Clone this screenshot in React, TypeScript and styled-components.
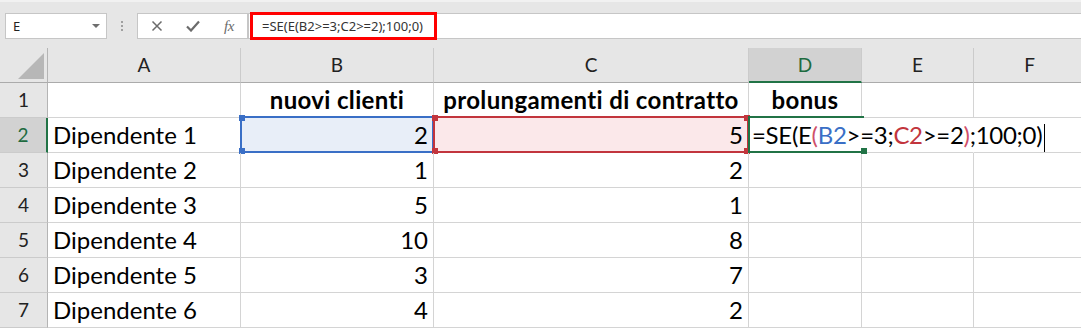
import React from 'react';
import styled, { createGlobalStyle } from 'styled-components';

const GlobalStyle = createGlobalStyle`
  html, body { margin: 0; padding: 0; background: #ffffff; }
  body { font-family: Lato, "Liberation Sans", sans-serif; overflow: hidden; }
  *, *::before, *::after { box-sizing: border-box; }
`;

const Page = styled.div`
  width: 1081px;
  height: 328px;
  overflow: hidden;
  background: #e6e6e6;
`;

/* ---------- toolbar ---------- */
const Toolbar = styled.div`
  height: 48px;
  display: flex;
  align-items: flex-start;
  padding: 11px 0 0 5px;
  border-top: 2px solid #f1f1f1;
  background: #e6e6e6;
`;

const NameBox = styled.div`
  width: 102px;
  height: 26px;
  background: #ffffff;
  border: 1px solid #c6c6c6;
  display: flex;
  align-items: center;
  justify-content: space-between;
  padding: 0 6px 0 7px;
  font-family: "Noto Sans", "Open Sans", sans-serif;
  font-size: 13px;
  color: #222;
`;

const DropArrow = styled.span`
  width: 0;
  height: 0;
  border-left: 4px solid transparent;
  border-right: 4px solid transparent;
  border-top: 4px solid #6e6e6e;
`;

const Grip = styled.div`
  margin: 8px 0 0 14px;
  display: flex;
  flex-direction: column;
  gap: 2px;
  & > span {
    width: 2px;
    height: 2px;
    background: #a0a0a0;
  }
`;

const ButtonGroup = styled.div`
  margin-left: 14px;
  width: 111px;
  height: 26px;
  background: #ffffff;
  border: 1px solid #c6c6c6;
  display: flex;
  align-items: center;
  padding-left: 1px;
`;

const IconSlot = styled.span`
  width: 36px;
  height: 24px;
  display: flex;
  align-items: center;
  justify-content: center;
  color: #6b6b6b;
`;

const FxText = styled.span`
  font-family: "Liberation Serif", "DejaVu Serif", serif;
  font-style: italic;
  font-size: 15px;
  color: #6b6b6b;
  letter-spacing: -0.5px;
`;

const FormulaBar = styled.div`
  flex: 1;
  height: 26px;
  background: #ffffff;
  border: 1px solid #c6c6c6;
  border-right: none;
  display: flex;
  align-items: center;
`;

const Highlight = styled.span`
  height: 28px;
  margin-left: 1px;
  border: 3px solid #ff0000;
  padding: 0 11px 0 9px;
  display: inline-flex;
  align-items: center;
  font-family: "Noto Sans", "Open Sans", sans-serif;
  font-size: 13px;
  color: #333;
  white-space: nowrap;
`;

/* ---------- sheet ---------- */
const Sheet = styled.div`
  display: grid;
  grid-template-columns: 48px 193px 193px 315px 113px 112px 112px;
  grid-auto-rows: 35px;
  background: #ffffff;
`;

const Corner = styled.div`
  background: #e6e6e6;
  border-right: 1px solid #b4b4b4;
  border-bottom: 1px solid #ababab;
  display: flex;
  align-items: flex-end;
  justify-content: flex-end;
  padding: 0 3px 3px 0;
`;

const Triangle = styled.span`
  width: 0;
  height: 0;
  border-left: 26px solid transparent;
  border-bottom: 26px solid #b7b7b7;
`;

const ColHeader = styled.div<{ $active?: boolean }>`
  background: ${p => (p.$active ? '#d2d2d2' : '#e6e6e6')};
  border-right: 1px solid #cbcbcb;
  border-bottom: ${p => (p.$active ? '2px solid #217346' : '1px solid #ababab')};
  text-align: center;
  font-size: 19px;
  line-height: ${p => (p.$active ? '33px' : '34px')};
  color: ${p => (p.$active ? '#1e6b40' : '#222')};
`;

const RowHeader = styled.div<{ $active?: boolean }>`
  background: ${p => (p.$active ? '#d2d2d2' : '#e6e6e6')};
  border-right: ${p => (p.$active ? '2px solid #217346' : '1px solid #b4b4b4')};
  border-bottom: 1px solid #cbcbcb;
  text-align: center;
  font-size: 19px;
  line-height: 34px;
  color: ${p => (p.$active ? '#1e6b40' : '#222')};
`;

const Cell = styled.div<{
  $align?: 'left' | 'right' | 'center';
  $bold?: boolean;
  $fill?: string;
  $noRight?: boolean;
  $front?: boolean;
}>`
  position: relative;
  background: ${p => p.$fill || 'transparent'};
  border-right: 1px solid ${p => (p.$noRight ? 'transparent' : '#d4d4d4')};
  border-bottom: 1px solid #d4d4d4;
  padding: 0 5px;
  font-size: 24px;
  font-weight: ${p => (p.$bold ? 700 : 400)};
  letter-spacing: ${p => (p.$bold ? '0.35px' : '0')};
  line-height: 34px;
  color: #000;
  text-align: ${p => p.$align || 'left'};
  white-space: nowrap;
  overflow: visible;
  z-index: ${p => (p.$front ? 2 : 1)};
`;

const FormulaText = styled.span`
  margin-left: -2px;
  letter-spacing: -0.3px;
`;

const Frame = styled.div<{ $color: string; $open?: boolean }>`
  position: absolute;
  top: -2px;
  left: -1px;
  right: ${p => (p.$open ? '-3px' : '-1px')};
  bottom: -1px;
  border: 2px solid ${p => p.$color};
  border-right: ${p => (p.$open ? 'none' : `2px solid ${p.$color}`)};
  pointer-events: none;
`;

const Handle = styled.span<{ $color: string; $v: 'top' | 'bottom'; $h: 'left' | 'right' }>`
  position: absolute;
  width: 6px;
  height: 6px;
  background: ${p => p.$color};
  ${p => (p.$v === 'top' ? 'top: -3px;' : 'bottom: -3px;')}
  ${p => (p.$h === 'left' ? 'left: -3px;' : 'right: -3px;')}
`;

const Ref = styled.span<{ $color: string }>`
  color: ${p => p.$color};
`;

const Caret = styled.span`
  display: inline-block;
  width: 1px;
  height: 28px;
  margin-left: 2px;
  background: #000;
  vertical-align: middle;
`;

const BLUE = '#3a6fc6';
const RED = '#c2353d';
const GREEN = '#217346';
const PAREN = '#d0506a';

const rows = [
  ['Dipendente 1', '2', '5'],
  ['Dipendente 2', '1', '2'],
  ['Dipendente 3', '5', '1'],
  ['Dipendente 4', '10', '8'],
  ['Dipendente 5', '3', '7'],
  ['Dipendente 6', '4', '2'],
];

const cols = ['A', 'B', 'C', 'D', 'E', 'F'];

export default function App() {
  return (
    <Page>
      <GlobalStyle />
      <Toolbar>
        <NameBox>
          <span>E</span>
          <DropArrow />
        </NameBox>
        <Grip>
          <span />
          <span />
          <span />
        </Grip>
        <ButtonGroup>
          <IconSlot>
            <svg width="12" height="12" viewBox="0 0 12 12">
              <path d="M1.5 1.5 L10.5 10.5 M10.5 1.5 L1.5 10.5" stroke="#6b6b6b" strokeWidth="1.5" fill="none" />
            </svg>
          </IconSlot>
          <IconSlot>
            <svg width="14" height="12" viewBox="0 0 14 12">
              <path d="M1 6.5 L5 10.5 L13 1.5" stroke="#6b6b6b" strokeWidth="2.2" fill="none" />
            </svg>
          </IconSlot>
          <IconSlot>
            <FxText>fx</FxText>
          </IconSlot>
        </ButtonGroup>
        <FormulaBar>
          <Highlight>=SE(E(B2&gt;=3;C2&gt;=2);100;0)</Highlight>
        </FormulaBar>
      </Toolbar>

      <Sheet>
        <Corner>
          <Triangle />
        </Corner>
        {cols.map(c => (
          <ColHeader key={c} $active={c === 'D'}>
            {c}
          </ColHeader>
        ))}

        <RowHeader>1</RowHeader>
        <Cell />
        <Cell $bold $align="center">nuovi clienti</Cell>
        <Cell $bold $align="center">prolungamenti di contratto</Cell>
        <Cell $bold $align="center">bonus</Cell>
        <Cell />
        <Cell />

        {rows.map((r, i) => {
          const active = i === 0;
          return (
            <React.Fragment key={r[0]}>
              <RowHeader $active={active}>{i + 2}</RowHeader>
              <Cell>{r[0]}</Cell>
              <Cell $align="right" $fill={active ? '#e8eef8' : undefined}>
                {r[1]}
                {active && (
                  <Frame $color={BLUE}>
                    <Handle $color={BLUE} $v="top" $h="left" />
                    <Handle $color={BLUE} $v="bottom" $h="left" />
                  </Frame>
                )}
              </Cell>
              <Cell $align="right" $fill={active ? '#fbe8ea' : undefined}>
                {r[2]}
                {active && (
                  <Frame $color={RED}>
                    <Handle $color={RED} $v="top" $h="left" />
                    <Handle $color={RED} $v="bottom" $h="left" />
                    <Handle $color={RED} $v="top" $h="right" />
                    <Handle $color={RED} $v="bottom" $h="right" />
                  </Frame>
                )}
              </Cell>
              {active ? (
                <Cell $noRight $front>
                  <FormulaText>
                    =SE(E<Ref $color={PAREN}>(</Ref>
                    <Ref $color={BLUE}>B2</Ref>&gt;=3;
                    <Ref $color={RED}>C2</Ref>&gt;=2<Ref $color={PAREN}>)</Ref>;100;0)
                  </FormulaText>
                  <Caret />
                  <Frame $color={GREEN} $open>
                    <Handle $color={GREEN} $v="bottom" $h="right" />
                  </Frame>
                </Cell>
              ) : (
                <Cell />
              )}
              <Cell $noRight={active} />
              <Cell />
            </React.Fragment>
          );
        })}
      </Sheet>
    </Page>
  );
}
